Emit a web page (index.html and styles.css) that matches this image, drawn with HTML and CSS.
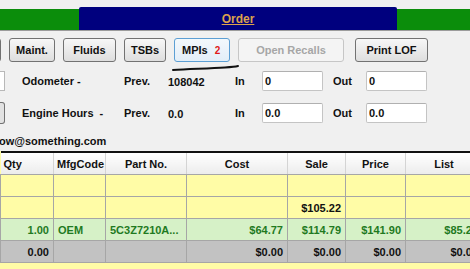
FILE: index.html
```html
<!DOCTYPE html>
<html>
<head>
    <title>Repair Order</title>
    <link rel="stylesheet" href="styles.css">
</head>
<body>
    <div class="tabs">
        <div class="tab tab-side"></div>
        <div class="tab tab-active"><span>Order</span></div>
        <div class="tab tab-side tab-fill"></div>
    </div>

    <div class="toolbar">
        <button type="button" class="btn btn-cut"></button>
        <button type="button" class="btn w-maint">Maint.</button>
        <button type="button" class="btn w-fluids">Fluids</button>
        <button type="button" class="btn w-tsbs">TSBs</button>
        <button type="button" class="btn btn-focus w-mpis">MPIs <span class="count">2</span></button>
        <button type="button" class="btn w-recalls" disabled>Open Recalls</button>
        <button type="button" class="btn w-print">Print LOF</button>
    </div>

    <div class="readings">
        <div class="reading-row">
            <div><span class="cut-input"></span></div>
            <span>Odometer -</span>
            <span>Prev.</span>
            <span class="prev-value">108042</span>
            <span>In</span>
            <input type="text" class="field" value="0">
            <span></span>
            <span>Out</span>
            <input type="text" class="field" value="0">
        </div>
        <div class="reading-row">
            <div><span class="cut-button"></span></div>
            <span>Engine Hours&nbsp;&nbsp;-</span>
            <span>Prev.</span>
            <span class="prev-value">0.0</span>
            <span>In</span>
            <input type="text" class="field" value="0.0">
            <span></span>
            <span>Out</span>
            <input type="text" class="field" value="0.0">
        </div>
    </div>

    <div class="email">ow@something.com</div>

    <div class="grid-wrap">
        <table class="lines">
            <colgroup>
                <col style="width:53px">
                <col style="width:52px">
                <col style="width:81px">
                <col style="width:101px">
                <col style="width:58px">
                <col style="width:60px">
                <col style="width:77px">
                <col style="width:80px">
            </colgroup>
            <thead>
                <tr>
                    <th class="left">Qty</th>
                    <th>MfgCode</th>
                    <th>Part No.</th>
                    <th>Cost</th>
                    <th>Sale</th>
                    <th>Price</th>
                    <th>List</th>
                    <th></th>
                </tr>
            </thead>
            <tbody>
                <tr class="row-empty">
                    <td></td><td></td><td></td><td></td><td></td><td></td><td></td><td></td>
                </tr>
                <tr class="row-empty">
                    <td></td><td></td><td></td><td></td><td class="num">$105.22</td><td></td><td></td><td></td>
                </tr>
                <tr class="row-part">
                    <td class="num">1.00</td>
                    <td>OEM</td>
                    <td>5C3Z7210A...</td>
                    <td class="num">$64.77</td>
                    <td class="num">$114.79</td>
                    <td class="num">$141.90</td>
                    <td class="num">$85.22</td>
                    <td></td>
                </tr>
                <tr class="row-total">
                    <td class="num">0.00</td>
                    <td></td>
                    <td></td>
                    <td class="num">$0.00</td>
                    <td class="num">$0.00</td>
                    <td class="num">$0.00</td>
                    <td class="num">$0.00</td>
                    <td></td>
                </tr>
            </tbody>
        </table>
    </div>

    <svg class="scribble" width="80" height="14" viewBox="0 0 80 14">
        <path d="M3 10 C 20 9, 40 8.5, 55 7.5 C 62 7, 66 6.5, 68 6" fill="none" stroke="#111" stroke-width="2" stroke-linecap="round"/>
    </svg>
</body>
</html>
```

FILE: styles.css
```css
body {
    margin: 0;
    width: 470px;
    height: 269px;
    overflow: hidden;
    position: relative;
    background: #f0f0f0;
    font-family: "Liberation Sans", Arial, sans-serif;
    font-size: 11px;
    font-weight: bold;
    color: #111;
}

.tabs {
    display: flex;
    align-items: flex-end;
    height: 30px;
    border-bottom: 1px solid #9c9c9c;
}

.tab-side {
    width: 79px;
    height: 21px;
    background: #0b8d0b;
}

.tab-fill {
    flex: 1;
}

.tab-active {
    width: 318px;
    height: 23px;
    background: #00007e;
    display: flex;
    align-items: center;
    justify-content: center;
    border-radius: 2px 2px 0 0;
}

.tab-active span {
    color: #dca24c;
    font-size: 12px;
    text-decoration: underline;
}

.toolbar {
    display: flex;
    gap: 8px;
    margin-top: 7px;
}

.btn {
    height: 24px;
    padding: 0;
    border: 1px solid #727272;
    border-radius: 3px;
    background: linear-gradient(#f7f7f7, #dedede);
    font: inherit;
    color: #111;
}

.btn-cut {
    width: 40px;
    margin-left: -39px;
}

.w-maint { width: 46px; }
.w-fluids { width: 53px; }
.w-tsbs { width: 42px; }
.w-recalls { width: 106px; }
.w-print { width: 73px; margin-left: 3px; }

.w-mpis {
    width: 56px;
    text-align: left;
    padding-left: 7px;
}

.btn-focus {
    border-color: #5c9fd4;
    background: linear-gradient(#f3f8fc, #e3eef8);
}

.count {
    color: #e01818;
    font-size: 10px;
    margin-left: 4px;
}

.btn:disabled {
    border-color: #c6c6c6;
    background: #f4f4f4;
    color: #a6a6a6;
}

.readings {
    margin-top: 9px;
    display: flex;
    flex-direction: column;
    gap: 11px;
}

.reading-row {
    display: grid;
    grid-template-columns: 22px 102px 44px 67px 27px 61px 10px 33px 61px;
    align-items: center;
    height: 20px;
}

.prev-value {
    margin-top: 1px;
}

.cut-input {
    display: block;
    width: 4px;
    height: 18px;
    background: #fff;
    border: 1px solid #b8b8b8;
    border-left: none;
}

.cut-button {
    display: block;
    width: 4px;
    height: 20px;
    background: #e2e2e2;
    border: 1px solid #727272;
    border-left: none;
    border-radius: 0 3px 3px 0;
}

.field {
    box-sizing: border-box;
    width: 61px;
    height: 20px;
    margin: 0;
    padding: 0 2px;
    border: 1px solid #c4c4c4;
    border-top-color: #b0b0b0;
    border-radius: 2px;
    background: #fff;
    font: inherit;
    color: #111;
}

.email {
    margin-top: 12px;
    margin-left: -1px;
    line-height: 14px;
}

.grid-wrap {
    margin-top: 3px;
    height: 118px;
    overflow: hidden;
    background: #fffca6;
}

.lines {
    border-collapse: collapse;
    table-layout: fixed;
    width: 470px;
    border-top: 2px solid #111;
}

.lines th {
    height: 21px;
    padding: 0 3px;
    background: linear-gradient(#ffffff, #ececec);
    border-right: 1px solid #d4d4d4;
    border-bottom: 1px solid #a6a6a6;
    text-align: center;
    font-weight: bold;
}

.lines th.left {
    text-align: left;
}

.lines td {
    height: 21px;
    padding: 0 4px;
    border: 1px solid #a6a6a6;
    border-top: none;
    white-space: nowrap;
    overflow: hidden;
}

.lines td.num {
    text-align: right;
}

.row-empty td {
    background: #fffca6;
}

.row-part td {
    background: #d6f1c7;
    color: #1f7a1f;
}

.row-total td {
    background: #c2c2c2;
}

.scribble {
    position: absolute;
    left: 170px;
    top: 60px;
}
```
